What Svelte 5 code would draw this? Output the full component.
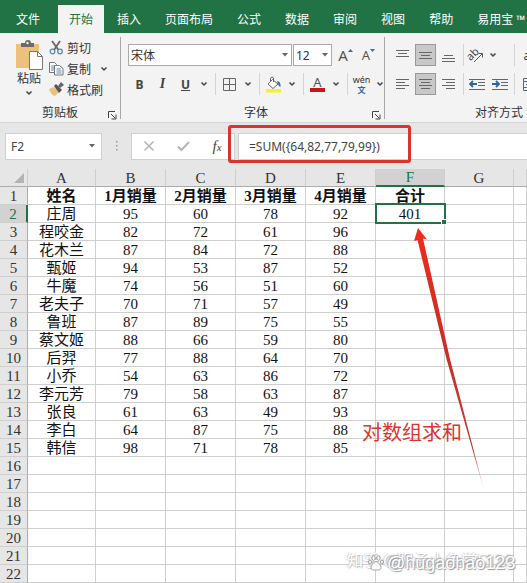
<script>
    let tabs = ['文件', '开始', '插入', '页面布局', '公式', '数据', '审阅', '视图', '帮助', '易用宝 ™']
    let activeTab = '开始'

    let columns = ['A', 'B', 'C', 'D', 'E', 'F', 'G', '']
    let header = ['姓名', '1月销量', '2月销量', '3月销量', '4月销量', '合计']
    let people = [
        ['庄周', 95, 60, 78, 92, 401],
        ['程咬金', 82, 72, 61, 96],
        ['花木兰', 87, 84, 72, 88],
        ['甄姬', 94, 53, 87, 52],
        ['牛魔', 74, 56, 51, 60],
        ['老夫子', 70, 71, 57, 49],
        ['鲁班', 87, 89, 75, 55],
        ['蔡文姬', 88, 66, 59, 80],
        ['后羿', 77, 88, 64, 70],
        ['小乔', 54, 63, 86, 72],
        ['李元芳', 79, 58, 63, 87],
        ['张良', 61, 63, 49, 93],
        ['李白', 64, 87, 75, 88],
        ['韩信', 98, 71, 78, 85]
    ]
    let rows = [header, ...people]
    while (rows.length < 22) rows.push([])

    let cellName = 'F2'
    let formula = '=SUM({64,82,77,79,99})'
</script>

{#snippet chevron()}
    <svg width="8" height="6" viewBox="0 0 8 6"><path d="M1.500 1.500 4 4l2.500-2.500" fill="none" stroke="#444" stroke-width="1.500"/></svg>
{/snippet}

{#snippet triangle()}
    <svg width="8" height="6" viewBox="0 0 8 6"><path d="M1 1h6L4 4.500z" fill="#666"/></svg>
{/snippet}

{#snippet launcher()}
    <button class="launcher" aria-label="更多">
        <svg width="9" height="9" viewBox="0 0 9 9" fill="none" stroke="#444"><path d="M.5 7V.5H7M3 3l4.500 4.500M8 3.500V8H3.500"/></svg>
    </button>
{/snippet}

{#snippet lines(list)}
    <svg width="15" height="15" viewBox="0 0 15 15" stroke="#666">
        {#each list as [x1, x2, y]}
            <line {x1} {x2} y1={y} y2={y}/>
        {/each}
    </svg>
{/snippet}

<main>
    <nav>
        {#each tabs as tab}
            <button class="tab" class:active={tab === activeTab} on:click={() => activeTab = tab}>{tab}</button>
        {/each}
    </nav>

    <div class="ribbon">
        <section class="group clipboard">
            <div class="clip-tools">
                <button class="paste">
                    <svg width="28" height="30" viewBox="0 0 28 30">
                        <path d="M1 4h23v24H1z" fill="#ecc17c"/>
                        <path d="M6 7V3h4q0-3 3-3t3 3h3v4z" fill="#6b6b6b"/>
                        <circle cx="12.500" cy="3" r="1.200" fill="#f3f3f3"/>
                        <path d="M14.500 11.500h8l5 5v13h-13z" fill="#fff" stroke="#777"/>
                        <path d="M22.500 11.500v5h5" fill="none" stroke="#777"/>
                    </svg>
                    <span>粘贴</span>
                    {@render chevron()}
                </button>
                <div class="small-tools">
                    <button>
                        <svg width="15" height="15" viewBox="0 0 15 15" fill="none">
                            <path d="M3 1l6.500 9M11 1 5 10" stroke="#666" stroke-width="1.800"/>
                            <circle cx="3.500" cy="11.500" r="2.300" stroke="#5b87b5" stroke-width="1.300"/>
                            <circle cx="11" cy="11.500" r="2.300" stroke="#5b87b5" stroke-width="1.300"/>
                        </svg>
                        剪切
                    </button>
                    <button>
                        <svg width="15" height="15" viewBox="0 0 15 15" fill="#fff" stroke="#777">
                            <path d="M.5 1.500h5l2 2v8h-7z"/>
                            <path d="M2 5h3M2 7h3M2 9h3" stroke="#5b87b5"/>
                            <path d="M5.500 4.500h5l3.500 3v6.500H5.500z"/>
                            <path d="M7.500 8h4M7.500 10h5M7.500 12h5" stroke="#5b87b5"/>
                        </svg>
                        复制
                        <span class="push">{@render chevron()}</span>
                    </button>
                    <button>
                        <svg width="15" height="15" viewBox="0 0 15 15">
                            <path d="M0 7l5-2 5 5-4 4q-4-1-6-7z" fill="#ecc17c"/>
                            <path d="M5 4l2-2 6 6-3 3z" fill="#555"/>
                            <path d="M9 4l3-4 3 3-4 3z" fill="#666"/>
                        </svg>
                        格式刷
                    </button>
                </div>
            </div>
            <div class="caption">剪贴板{@render launcher()}</div>
        </section>

        <section class="group font">
            <div class="tools">
                <div class="combo family">
                    <select aria-label="字体"><option>宋体</option></select>
                    {@render triangle()}
                </div>
                <div class="combo size">
                    <select aria-label="字号"><option>12</option></select>
                    {@render triangle()}
                </div>
                <button class="tool letter big" aria-label="增大字号">A<svg width="5" height="14" viewBox="0 0 5 14"><path d="M0 4 2.500 1 5 4z" fill="#3c6e9f"/></svg></button>
                <button class="tool letter" aria-label="减小字号">A<svg width="5" height="14" viewBox="0 0 5 14"><path d="M0 1h5L2.500 4z" fill="#3c6e9f"/></svg></button>
            </div>
            <div class="tools">
                <button class="tool style"><b>B</b></button>
                <button class="tool style"><i>I</i></button>
                <button class="tool style"><u>U</u></button>
                <button class="drop" aria-label="下划线">{@render chevron()}</button>
                <span class="rule"></span>
                <button class="tool" aria-label="边框">
                    <svg width="13" height="13" viewBox="0 0 13 13" fill="none" stroke="#666"><path d="M.5.5h12v12H.5zM6.500.5v12M.5 6.500h12"/></svg>
                </button>
                <button class="drop" aria-label="边框选项">{@render chevron()}</button>
                <span class="rule"></span>
                <button class="tool" aria-label="填充颜色">
                    <svg width="16" height="17" viewBox="0 0 16 17">
                        <path d="M0 13h15v3.500H0z" fill="#f8f02a"/>
                        <path d="M6.500 3.500 12 8l-5 4.500L2 8z" fill="#fff" stroke="#666"/>
                        <path d="M4.500 6V2q1.500-2 3 0v4" fill="none" stroke="#666"/>
                        <path d="M11 5q4 0 3.500 6-2-.5-2.500-3z" fill="#3c6e9f"/>
                    </svg>
                </button>
                <button class="drop" aria-label="填充选项">{@render chevron()}</button>
                <span class="rule"></span>
                <button class="tool color" aria-label="字体颜色">A</button>
                <button class="drop" aria-label="字体颜色选项">{@render chevron()}</button>
                <span class="rule"></span>
                <button class="tool pinyin"><span>wén</span><em>文</em></button>
                <button class="drop" aria-label="拼音选项">{@render chevron()}</button>
            </div>
            <div class="caption">字体{@render launcher()}</div>
        </section>

        <section class="group align">
            <div class="tools">
                <button class="tool" aria-label="顶端对齐">{@render lines([[1, 14, 2.5], [3, 12, 5.5], [1, 14, 8.5]])}</button>
                <button class="tool on" aria-label="垂直居中">{@render lines([[1, 14, 4.5], [3, 12, 7.5], [1, 14, 10.5]])}</button>
                <button class="tool" aria-label="底端对齐">{@render lines([[3, 12, 7.5], [1, 14, 10.5], [1, 14, 13.5]])}</button>
                <span class="rule"></span>
                <button class="tool" aria-label="方向">
                    <svg class="spill" width="17" height="17" viewBox="0 0 17 17">
                        <text x="0" y="12" transform="rotate(-45 4 10)" font-size="11" fill="#444">ab</text>
                        <path d="M6 15l8-8M10.500 6.500H14.500V10.500" fill="none" stroke="#555"/>
                    </svg>
                </button>
                <button class="tool left" aria-label="方向选项">{@render chevron()}</button>
                <span class="rule"></span>
                <button class="tool wrap">ab</button>
            </div>
            <div class="tools">
                <button class="tool" aria-label="左对齐">{@render lines([[1, 14, 2.5], [1, 10, 5.5], [1, 14, 8.5], [1, 10, 11.5]])}</button>
                <button class="tool on" aria-label="居中">{@render lines([[1, 14, 2.5], [3, 12, 5.5], [1, 14, 8.5], [3, 12, 11.5]])}</button>
                <button class="tool" aria-label="右对齐">{@render lines([[1, 14, 2.5], [5, 14, 5.5], [1, 14, 8.5], [5, 14, 11.5]])}</button>
                <span class="rule"></span>
                <button class="tool" aria-label="减少缩进">
                    <svg width="16" height="15" viewBox="0 0 16 15" fill="none" stroke="#666"><path d="M0 2.500h16M9 5.500h7M9 8.500h7M0 12.500h16"/><path d="M8 7H1M4 4 1 7l3 3" stroke="#2f659b" stroke-width="1.800"/></svg>
                </button>
                <button class="tool" aria-label="增加缩进">
                    <svg width="16" height="15" viewBox="0 0 16 15" fill="none" stroke="#666"><path d="M0 2.500h16M9 5.500h7M9 8.500h7M0 12.500h16"/><path d="M0 7h7M4 4l3 3-3 3" stroke="#2f659b" stroke-width="1.800"/></svg>
                </button>
                <span class="rule"></span>
                <button class="tool merge" aria-label="合并后居中">
                    <svg width="15" height="15" viewBox="0 0 15 15" fill="none" stroke="#666"><path d="M.5 1.500h14v12H.5zM.5 4.500h14M.5 10.500h14M5.500 1.500v3M5.500 10.500v3"/><path d="M3 7.500h9" stroke="#2f659b"/></svg>
                </button>
            </div>
            <div class="caption">对齐方式</div>
        </section>
    </div>

    <div class="formula-bar">
        <div class="box name">
            <input aria-label="名称框" bind:value={cellName}>
            {@render triangle()}
        </div>
        <svg class="dots" width="3" height="12" viewBox="0 0 3 12" fill="#999"><path d="M1 1h1.500v1.500H1zM1 5h1.500v1.500H1zM1 9h1.500v1.500H1z"/></svg>
        <div class="box actions">
            <button aria-label="取消"><svg width="12" height="12" viewBox="0 0 12 12"><path d="M1.500 1.500l9 9M10.500 1.500l-9 9" stroke="#b5b5b5" stroke-width="1.500"/></svg></button>
            <button aria-label="输入"><svg width="13" height="12" viewBox="0 0 13 12"><path d="M1 6.500 4.500 10 12 2" fill="none" stroke="#b5b5b5" stroke-width="2"/></svg></button>
            <button class="fx">f<small>x</small></button>
        </div>
        <div class="box formula">
            <input aria-label="编辑栏" bind:value={formula}>
        </div>
        <div class="highlight"></div>
    </div>

    <div class="sheet">
        <table>
            <colgroup>
                <col class="c-index">
                <col class="c-name">
                <col class="c-month"><col class="c-month"><col class="c-month"><col class="c-month">
                <col class="c-total"><col class="c-total">
                <col>
            </colgroup>
            <thead>
                <tr>
                    <th class="corner"><svg width="10" height="10" viewBox="0 0 10 10"><path d="M10 0v10H0z" fill="#b4b4b4"/></svg></th>
                    {#each columns as column}
                        <th class:picked={column === 'F'}>{column}</th>
                    {/each}
                </tr>
            </thead>
            <tbody>
                {#each rows as row, r}
                    <tr class:titles={r === 0}>
                        <th class:picked={r === 1}>{r + 1}</th>
                        {#each columns as column, c}
                            <td class:selected={r === 1 && column === 'F'}>{row[c] ?? ''}</td>
                        {/each}
                    </tr>
                {/each}
            </tbody>
        </table>

        <svg class="arrow" width="76" height="268" viewBox="0 0 76 268">
            <defs>
                <linearGradient id="fade" x1="0" y1="0" x2="0" y2="1">
                    <stop offset="0" stop-color="#f02c1c"/>
                    <stop offset=".4" stop-color="#cf2c24"/>
                    <stop offset=".85" stop-color="#bd3a32"/>
                    <stop offset="1" stop-color="#bd3a32" stop-opacity=".3"/>
                </linearGradient>
            </defs>
            <path d="M6 2 15 13.500 11 12.500 38 133 72 264 34.500 133 5.500 14 2 15z" fill="url(#fade)"/>
        </svg>
        <p class="note">对数组求和</p>
        <p class="mark zhihu">知乎 @眼孟小鱼学5126</p>
        <p class="mark baidu">
            <svg width="16" height="16" viewBox="0 0 16 16" fill="#fff" stroke="#999">
                <ellipse cx="5.500" cy="3" rx="1.700" ry="2.300"/><ellipse cx="10.500" cy="3" rx="1.700" ry="2.300"/>
                <ellipse cx="2" cy="7" rx="1.500" ry="2"/><ellipse cx="14" cy="7" rx="1.500" ry="2"/>
                <path d="M8 6.500c2 0 5 4 5 6 0 3-3 2.500-5 2.500s-5 .5-5-2.500c0-2 3-6 5-6z"/>
            </svg>
            @hugaohao123
        </p>
    </div>
</main>

<style>
    :global(body) {
        margin: 0;
        overflow-x: hidden;
        background: #fff;
    }

    main {
        font-family: "Noto Sans", "Noto Sans CJK SC", sans-serif;
        font-size: 12px;
        color: #333;
        overflow: hidden;
    }

    button, input, select {
        font: inherit;
        color: inherit;
        background: none;
        border: 0;
        padding: 0;
        margin: 0;
        outline: 0;
    }

    svg {
        display: block;
        flex: none;
    }

    nav {
        display: flex;
        gap: 2px;
        height: 28px;
        padding: 5px 0 0 5px;
        background: #217346;
    }

    .tab {
        flex: none;
        padding: 0 11px;
        color: #fff;
        white-space: nowrap;
    }

    .tab:first-child {
        margin-right: 5px;
    }

    .tab.active {
        background: #f3f3f3;
        color: #217346;
    }

    .ribbon {
        display: flex;
        height: 89px;
        background: #f3f3f3;
        border-bottom: 1px solid #d6d6d6;
        overflow: hidden;
    }

    .group {
        flex: none;
        display: flex;
        flex-direction: column;
        box-sizing: border-box;
        height: 82px;
        margin-top: 4px;
        border-right: 1px solid #a8a8a8;
    }

    .clipboard {
        width: 121px;
    }

    .font {
        width: 264px;
        padding-left: 7px;
    }

    .align {
        width: 226px;
        padding-left: 7px;
    }

    .caption {
        display: flex;
        align-items: center;
        justify-content: center;
        height: 16px;
        margin-top: auto;
        margin-bottom: -1px;
        position: relative;
    }

    .align .caption {
        padding-right: 4px;
    }

    .launcher {
        position: absolute;
        right: 3px;
        bottom: 0;
    }

    .clip-tools {
        display: flex;
        gap: 4px;
        padding-left: 13px;
    }

    .paste {
        display: flex;
        flex-direction: column;
        align-items: center;
        padding-top: 3px;
        width: 32px;
    }

    .paste span {
        line-height: 18px;
        margin-bottom: 2px;
    }

    .small-tools {
        display: flex;
        flex-direction: column;
    }

    .small-tools button {
        display: flex;
        align-items: center;
        gap: 3px;
        height: 21px;
        white-space: nowrap;
    }

    .push {
        margin-left: 6px;
    }

    .tools {
        display: flex;
        align-items: center;
        height: 22px;
        margin-top: 7px;
    }

    .combo {
        display: flex;
        align-items: center;
        box-sizing: border-box;
        height: 22px;
        padding: 0 2px;
        background: #fff;
        border: 1px solid #ababab;
    }

    .combo select {
        flex: 1;
        min-width: 0;
        appearance: none;
    }

    .family {
        width: 164px;
        margin-right: 1px;
    }

    .size {
        width: 39px;
        margin-right: 2px;
    }

    .tool {
        flex: none;
        display: flex;
        align-items: center;
        justify-content: center;
        box-sizing: border-box;
        width: 23px;
        height: 22px;
    }

    .drop {
        flex: none;
        display: flex;
        justify-content: center;
        width: 13px;
    }

    .rule {
        flex: none;
        width: 1px;
        height: 22px;
        margin: 0 2px 0 5px;
        background: #d4d4d4;
    }

    .letter {
        font-size: 13px;
        color: #555;
    }

    .big {
        font-size: 15px;
    }

    .style {
        font-size: 12px;
        color: #444;
    }

    .style i {
        font-family: "Liberation Serif", serif;
        font-size: 14px;
        font-weight: bold;
    }

    .style u {
        font-weight: bold;
    }

    .color {
        width: 15px;
        height: 15px;
        margin: 0 4px;
        font-size: 13px;
        line-height: 12px;
        border-bottom: 4px solid #c8141c;
        color: #555;
    }

    .pinyin {
        flex-direction: column;
        font-size: 9px;
        line-height: 9px;
    }

    .pinyin span {
        line-height: 11px;
    }

    .pinyin em {
        font-size: 8px;
        font-style: normal;
        font-weight: bold;
        color: #2f659b;
    }

    .align .tools {
        gap: 2px;
    }

    .align .tool {
        width: 21px;
    }

    .align .rule {
        margin: 0 0 0 2px;
    }

    .align .on {
        background: #c8c8c8;
        border: 1px solid #999;
    }

    .align .left {
        justify-content: flex-start;
    }

    .spill {
        overflow: visible;
    }

    .align .wrap, .align .merge {
        margin-left: 3px;
    }

    .formula-bar {
        display: flex;
        align-items: center;
        height: 46px;
        padding-left: 5px;
        background: #e6e6e6;
        position: relative;
    }

    .box {
        display: flex;
        align-items: center;
        box-sizing: border-box;
        height: 27px;
        background: #fff;
        border: 1px solid #d0d0d0;
    }

    .box input {
        flex: 1;
        min-width: 0;
        color: #444;
    }

    .name {
        width: 97px;
        padding: 0 5px;
    }

    .dots {
        margin: 0 13px;
    }

    .actions {
        width: 104px;
        padding-left: 0;
    }

    .actions button {
        display: flex;
        align-items: center;
        justify-content: center;
        width: 34px;
    }

    .actions .fx {
        align-items: baseline;
        font-family: "Liberation Serif", serif;
        font-size: 15px;
        font-style: italic;
        color: #444;
    }

    .fx small {
        font-size: 11px;
    }

    .formula {
        flex: 1;
        margin-left: 3px;
        padding-left: 10px;
        border-right: 0;
    }

    .highlight {
        position: absolute;
        left: 228px;
        top: 2px;
        box-sizing: border-box;
        width: 183px;
        height: 38px;
        border: 3px solid #d9362b;
        border-radius: 3px;
        pointer-events: none;
    }

    .sheet {
        position: relative;
    }

    table {
        width: 100%;
        table-layout: fixed;
        border-collapse: separate;
        border-spacing: 0;
        font-family: "Liberation Serif", "Noto Sans CJK SC", serif;
        font-size: 15px;
        line-height: 16px;
        color: #111;
    }

    .c-index {
        width: 28px;
    }

    .c-name {
        width: 68px;
    }

    .c-month {
        width: 70px;
    }

    .c-total {
        width: 69px;
    }

    th, td {
        box-sizing: border-box;
        height: 18px;
        padding: 1px 0 0;
        border-right: 1px solid #cfcfcf;
        border-bottom: 1px solid #cfcfcf;
        text-align: center;
        white-space: nowrap;
    }

    th {
        background: #e6e6e6;
        font-weight: normal;
        color: #333;
    }

    thead th {
        border-bottom-color: #ababab;
    }

    tbody th {
        border-right: 1px solid #ababab;
    }

    .corner svg {
        margin: 0 3px 0 auto;
    }

    .picked {
        background: #d2d2d2;
        color: #217346;
    }

    thead .picked {
        padding: 0;
        border-bottom: 2px solid #217346;
    }

    tbody .picked {
        border-right: 2px solid #217346;
    }

    .titles td {
        font-weight: bold;
    }

    .selected {
        position: relative;
    }

    .selected::before {
        content: "";
        position: absolute;
        inset: -2px -2px -2px -1px;
        border: 2px solid #217346;
    }

    .selected::after {
        content: "";
        position: absolute;
        right: -3px;
        bottom: -3px;
        width: 4px;
        height: 4px;
        background: #217346;
        border: 1px solid #fff;
    }

    .arrow {
        position: absolute;
        left: 412px;
        top: 57px;
    }

    .note, .mark {
        position: absolute;
        margin: 0;
        white-space: nowrap;
    }

    .note {
        left: 362px;
        top: 250px;
        font-size: 20px;
        line-height: 28px;
        color: #d9362b;
    }

    .mark {
        color: #fff;
        line-height: 20px;
    }

    .zhihu {
        left: 347px;
        top: 381px;
        font-size: 16px;
        text-shadow: 1px 1px 1px #bbb, -1px 0 1px #ccc;
    }

    .baidu {
        display: flex;
        align-items: center;
        gap: 3px;
        left: 368px;
        top: 384px;
        font-family: "Liberation Sans", sans-serif;
        font-size: 18px;
        text-shadow: 1px 1px 1px #999, -1px -1px 1px #aaa;
    }
</style>
